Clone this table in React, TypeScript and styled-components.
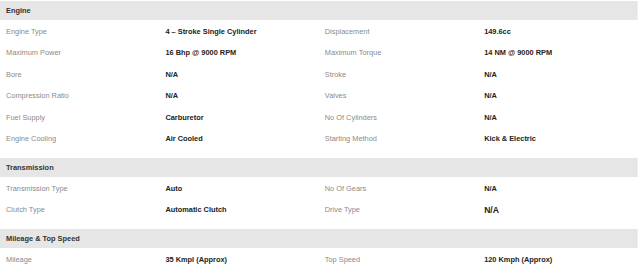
import styled, { createGlobalStyle } from "styled-components";
import { Fragment } from "react";

interface SpecPair {
  label: string;
  value: string;
  big?: boolean;
}

interface SectionType {
  title: string;
  rows: Array<[SpecPair, SpecPair]>;
}

const sections: Array<SectionType> = [
  {
    title: "Engine",
    rows: [
      [
        { label: "Engine Type", value: "4 – Stroke Single Cylinder" },
        { label: "Displacement", value: "149.6cc" },
      ],
      [
        { label: "Maximum Power", value: "16 Bhp @ 9000 RPM" },
        { label: "Maximum Torque", value: "14 NM @ 9000 RPM" },
      ],
      [
        { label: "Bore", value: "N/A" },
        { label: "Stroke", value: "N/A" },
      ],
      [
        { label: "Compression Ratio", value: "N/A" },
        { label: "Valves", value: "N/A" },
      ],
      [
        { label: "Fuel Supply", value: "Carburetor" },
        { label: "No Of Cylinders", value: "N/A" },
      ],
      [
        { label: "Engine Cooling", value: "Air Cooled" },
        { label: "Starting Method", value: "Kick & Electric" },
      ],
    ],
  },
  {
    title: "Transmission",
    rows: [
      [
        { label: "Transmission Type", value: "Auto" },
        { label: "No Of Gears", value: "N/A" },
      ],
      [
        { label: "Clutch Type", value: "Automatic Clutch" },
        { label: "Drive Type", value: "N/A", big: true },
      ],
    ],
  },
  {
    title: "Mileage & Top Speed",
    rows: [
      [
        { label: "Mileage", value: "35 Kmpl (Approx)" },
        { label: "Top Speed", value: "120 Kmph (Approx)" },
      ],
    ],
  },
];

const App = () => {
  return (
    <>
      <GlobalStyle />
      <SpecsContainer>
        {sections.map(({ title, rows }) => (
          <SpecTable key={title}>
            <Thead>
              <tr>
                <th colSpan={4}>{title}</th>
              </tr>
            </Thead>
            <tbody>
              {rows.map((pair, i) => (
                <SpecRow key={`${title},${i}`}>
                  {pair.map(({ label, value, big }) => (
                    <Fragment key={label}>
                      <Label>{label}</Label>
                      <Value $big={big}>{value}</Value>
                    </Fragment>
                  ))}
                </SpecRow>
              ))}
            </tbody>
          </SpecTable>
        ))}
      </SpecsContainer>
    </>
  );
};

export default App;

const GlobalStyle = createGlobalStyle`
  body {
    margin: 0;
    background: #ffffff;
    font-family: "Liberation Sans", Arial, sans-serif;
  }
`;

const SpecsContainer = styled.div`
  width: 638px;
  padding-top: 1px;
`;

const SpecTable = styled.table`
  width: 100%;
  table-layout: fixed;
  border-collapse: collapse;
  margin-bottom: 9.5px;
`;

const Thead = styled.thead`
  > tr > th {
    height: 19px;
    padding: 0 6px;
    background-color: #e6e6e6;
    border-right: 1px solid #eeeeee;
    text-align: left;
    vertical-align: middle;
    font-size: 7.4px;
    font-weight: 700;
    color: #333333;
  }
`;

const SpecRow = styled.tr`
  height: 21.4px;

  > td {
    width: 25%;
    padding: 1.5px 6px 0;
    vertical-align: middle;
    white-space: nowrap;
  }
`;

const Label = styled.td`
  font-size: 7.4px;
  color: #8a8a8a;
`;

const Value = styled.td<{ $big?: boolean }>`
  font-size: ${(props) => (props.$big ? "8.6px" : "7.4px")};
  font-weight: 700;
  color: #222222;
`;
